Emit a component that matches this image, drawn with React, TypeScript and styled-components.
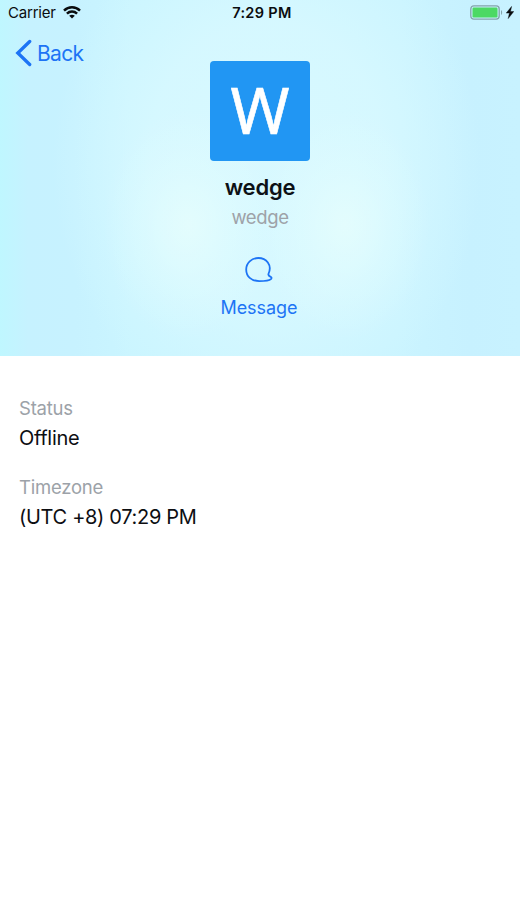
import React from "react";
import styled, { createGlobalStyle } from "styled-components";

const GlobalStyle = createGlobalStyle`
  * { box-sizing: border-box; }
  body {
    margin: 0;
    background: #fff;
    font-family: Inter, "Liberation Sans", sans-serif;
    -webkit-font-smoothing: antialiased;
  }
`;

const Screen = styled.main`
  width: 520px;
  min-height: 924px;
  background: #fff;
`;

const Header = styled.header`
  display: flex;
  flex-direction: column;
  height: 356px;
  background:
    radial-gradient(ellipse 85px 115px at 188px 225px, rgba(234, 255, 252, 0.65), rgba(232, 255, 253, 0.3) 50%, rgba(232, 255, 253, 0)),
    radial-gradient(ellipse 85px 115px at 345px 225px, rgba(234, 255, 252, 0.65), rgba(232, 255, 253, 0.3) 50%, rgba(232, 255, 253, 0)),
    radial-gradient(ellipse 215px 260px at 267px 165px, rgba(217, 249, 255, 0.9) 10%, rgba(217, 249, 255, 0.75) 55%, rgba(212, 247, 255, 0)),
    linear-gradient(to right, #bff7ff 0, #c6f2ff 28px, #c7f2ff 75px, #caf5ff 130px, #caf4ff 400px, #c7f1ff 470px, #c8f2ff 520px);
`;

const StatusBar = styled.div`
  display: grid;
  grid-template-columns: 1fr auto 1fr;
  align-items: center;
  height: 26px;
  padding: 0 6px 0 8px;
  color: #0a0c0e;
`;

const Carrier = styled.div`
  display: flex;
  align-items: center;
  gap: 7px;
  font-size: 15px;
  line-height: 26px;
  letter-spacing: -0.2px;
`;

const Clock = styled.time`
  padding-left: 2px;
  font-size: 14.5px;
  font-weight: 600;
  line-height: 26px;
  letter-spacing: 0.35px;
`;

const Power = styled.div`
  display: flex;
  align-items: center;
  justify-content: flex-end;
  gap: 3px;
`;

const NavBar = styled.nav`
  height: 35px;
  padding: 12px 0 0 15px;
`;

const BackButton = styled.button`
  display: flex;
  align-items: center;
  gap: 5px;
  height: 30px;
  padding: 0;
  border: 0;
  background: none;
  color: #1d74f5;
  font: 400 21px/31px Inter, sans-serif;
  letter-spacing: -0.65px;
`;

const Profile = styled.section`
  display: flex;
  flex-direction: column;
  align-items: center;
`;

const Avatar = styled.div`
  width: 100px;
  height: 100px;
  border-radius: 4px;
  background: #2196f3;
  color: #fff;
  font: 400 63.5px/98px "Noto Sans", sans-serif;
  -webkit-text-stroke: 0.6px #fff;
  text-align: center;
`;

const Name = styled.h1`
  margin: 13px 0 0;
  color: #0d1116;
  font-size: 22px;
  font-weight: 600;
  line-height: 26px;
  letter-spacing: -0.2px;
`;

const Username = styled.div`
  margin-top: 5px;
  color: #9ea2a8;
  font-size: 18.5px;
  line-height: 24px;
  letter-spacing: -0.4px;
`;

const MessageButton = styled.button`
  display: flex;
  flex-direction: column;
  align-items: center;
  margin: 28px 2px 0 0;
  padding: 0;
  border: 0;
  background: none;
  color: #1d74f5;
  font: 400 18px/24px Inter, sans-serif;
  letter-spacing: -0.05px;
`;

const MessageLabel = styled.span`
  margin-top: 13px;
`;

const Details = styled.dl`
  display: flex;
  flex-direction: column;
  gap: 23px;
  margin: 0;
  padding: 40px 19px;
`;

const Label = styled.dt`
  color: #9ca2a8;
  font-size: 18.5px;
  line-height: 24px;
  letter-spacing: -0.22px;
`;

const Value = styled.dd`
  margin: 5px 0 0;
  color: #0d0e12;
  font-size: 20px;
  line-height: 27px;
  letter-spacing: -0.32px;
`;

const WifiIcon = () => (
  <svg width="18" height="15" viewBox="0 0 18 15" fill="none" stroke="currentColor" strokeWidth="2.5">
    <path d="M1 4.6C5.6.2 12.4.2 17 4.6" />
    <path d="M3.9 7.7c3-2.8 7.2-2.8 10.2 0" />
    <path d="M9 12.6 6.2 9.8c1.7-1.4 3.9-1.4 5.6 0Z" fill="currentColor" stroke="none" />
  </svg>
);

const BatteryIcon = () => (
  <svg width="33" height="16" viewBox="0 0 33 16" fill="none">
    <rect x="0.8" y="0.9" width="28.4" height="13.2" rx="3" stroke="#83a3aa" strokeWidth="1.3" />
    <rect x="2.5" y="2.6" width="25" height="9.8" rx="1.2" fill="#4cd964" />
    <path d="M31 5v5c1.5-.7 1.5-4.3 0-5Z" fill="#83a3aa" />
  </svg>
);

const BoltIcon = () => (
  <svg width="8" height="14" viewBox="0 0 8 14" fill="currentColor">
    <path d="M5.6.4.2 7.1h3.2L2.2 12.6 7.8 5.5H4.5Z" stroke="currentColor" strokeWidth="0.4" />
  </svg>
);

const BackIcon = () => (
  <svg width="17" height="28" viewBox="0 0 17 28" fill="none" stroke="currentColor" strokeWidth="3.3" strokeLinecap="round" strokeLinejoin="miter">
    <path d="M14.7 2.5 2.8 14l11.9 11.5" />
  </svg>
);

const MessageIcon = () => (
  <svg width="28" height="26" viewBox="0 0 28 26" fill="none" stroke="currentColor" strokeWidth="1.8" strokeLinecap="round" strokeLinejoin="round">
    <path d="M23.6 16.5C27.4 8 21.2 1 13.4 1 6.4 1 1.2 6 1.2 12.5c0 7 5 11.5 13.1 11.6 6 0 10-.5 11.6-2 1.1-1.1.6-2-.6-2.5-1.7-.7-2.4-1.4-1.7-3.1Z" />
  </svg>
);

const details = [
  { label: "Status", value: "Offline" },
  { label: "Timezone", value: "(UTC +8) 07:29 PM" },
];

export default function App() {
  return (
    <>
      <GlobalStyle />
      <Screen>
        <Header>
          <StatusBar>
            <Carrier>Carrier <WifiIcon /></Carrier>
            <Clock>7:29 PM</Clock>
            <Power><BatteryIcon /><BoltIcon /></Power>
          </StatusBar>
          <NavBar>
            <BackButton type="button"><BackIcon />Back</BackButton>
          </NavBar>
          <Profile>
            <Avatar>W</Avatar>
            <Name>wedge</Name>
            <Username>wedge</Username>
            <MessageButton type="button">
              <MessageIcon />
              <MessageLabel>Message</MessageLabel>
            </MessageButton>
          </Profile>
        </Header>
        <Details>
          {details.map(({ label, value }) => (
            <div key={label}>
              <Label>{label}</Label>
              <Value>{value}</Value>
            </div>
          ))}
        </Details>
      </Screen>
    </>
  );
}
